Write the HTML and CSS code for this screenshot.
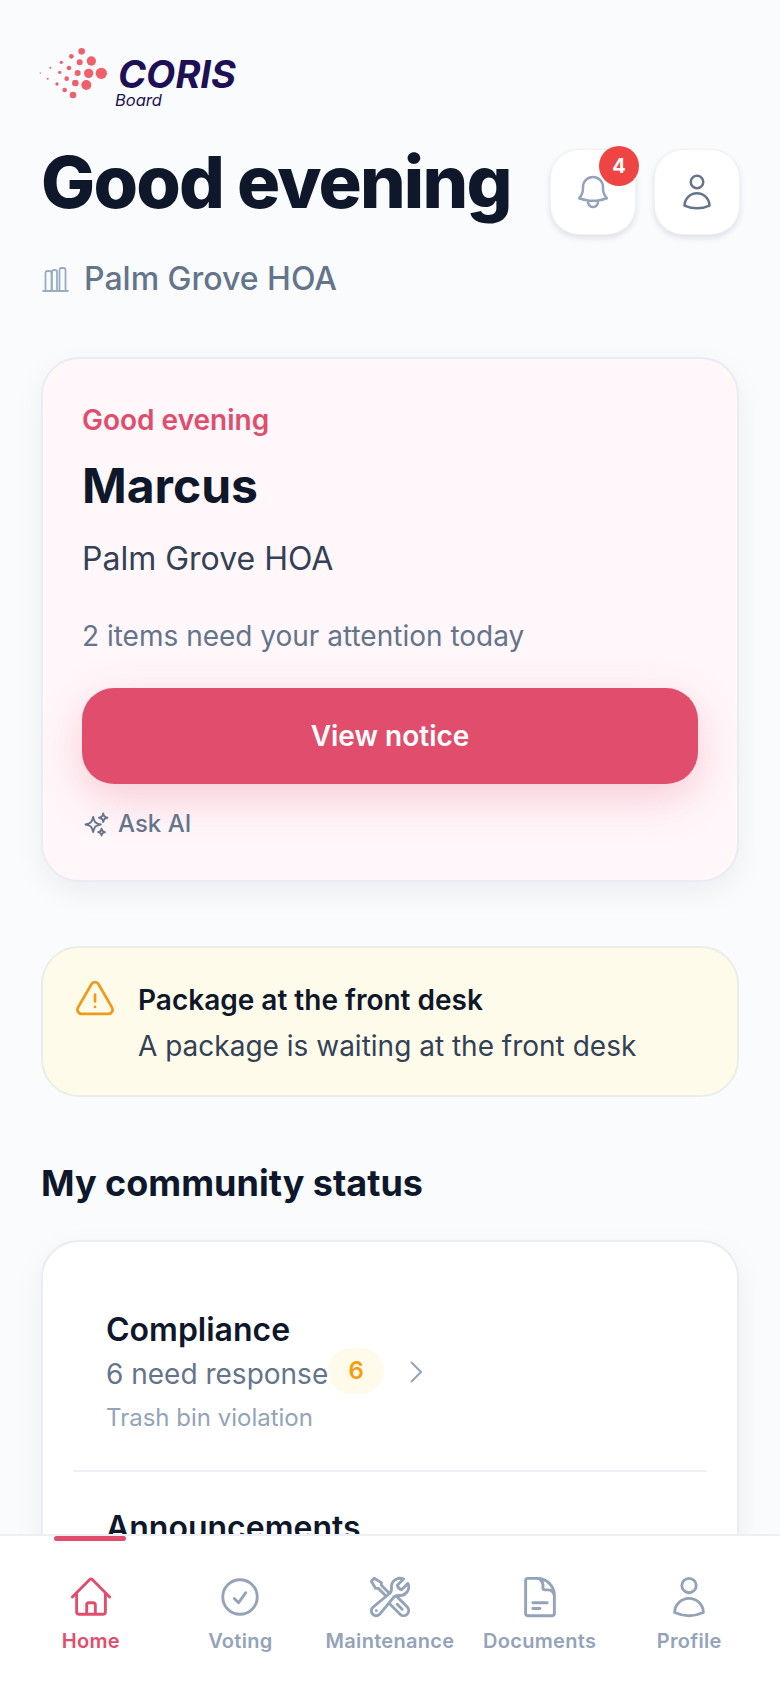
FILE: index.html
```html
<!DOCTYPE html>
<html lang="en">
<head>
    <meta charset="UTF-8">
    <meta name="viewport" content="width=device-width, initial-scale=1.0">
    <title>Coris Board</title>
    <link rel="stylesheet" href="styles.css">
</head>
<body>
    <main class="page">
        <div class="logo">
            <svg class="logo-dots" viewBox="115 80 210 156" fill="#f0606a">
                <circle cx="246" cy="93" r="10"/><circle cx="215" cy="108" r="7"/><circle cx="185" cy="126" r="5"/>
                <circle cx="152" cy="142" r="3"/><circle cx="122" cy="158" r="2"/><circle cx="144" cy="175" r="3"/>
                <circle cx="172" cy="191" r="5"/><circle cx="195" cy="209" r="7"/><circle cx="220" cy="224" r="10"/>
                <circle cx="240" cy="126" r="9"/><circle cx="275" cy="122" r="14"/><circle cx="208" cy="143" r="7"/>
                <circle cx="180" cy="156" r="5"/><circle cx="234" cy="158" r="9"/><circle cx="267" cy="159" r="14"/>
                <circle cx="305" cy="159" r="17"/><circle cx="201" cy="175" r="7"/><circle cx="227" cy="188" r="10"/>
                <circle cx="260" cy="194" r="15"/>
            </svg>
            <div class="logo-text">
                <div class="logo-name">CORIS</div>
                <div class="logo-sub">Board</div>
            </div>
        </div>

        <header class="head">
            <h1 class="title">Good evening</h1>
            <div class="head-btns">
                <button class="round-btn">
                    <svg class="icon bell" viewBox="0 0 24 24"><path d="M14.857 17.082a23.848 23.848 0 0 0 5.454-1.31A8.967 8.967 0 0 1 18 9.75V9A6 6 0 0 0 6 9v.75a8.967 8.967 0 0 1-2.312 6.022c1.733.64 3.56 1.085 5.455 1.31m5.714 0a24.255 24.255 0 0 1-5.714 0m5.714 0a3 3 0 1 1-5.714 0"/></svg>
                    <span class="count">4</span>
                </button>
                <button class="round-btn">
                    <svg class="icon user" viewBox="0 0 24 24"><path d="M15.75 6a3.75 3.75 0 1 1-7.5 0 3.75 3.75 0 0 1 7.5 0ZM4.501 20.118a7.5 7.5 0 0 1 14.998 0A17.933 17.933 0 0 1 12 21.75c-2.676 0-5.216-.584-7.499-1.632Z"/></svg>
                </button>
            </div>
        </header>

        <div class="place">
            <svg class="place-icon" viewBox="0 0 28 26"><path d="M1 25h26M4 24V7q0-2 2-2h2q2 0 2 2v17M10.500 24V6q0-2 2-2h1q2 0 2 2v18M18 24V4q0-2 2-2h2q2 0 2 2v20"/></svg>
            Palm Grove HOA
        </div>

        <section class="hero">
            <div class="hero-greet">Good evening</div>
            <div class="hero-name">Marcus</div>
            <div class="hero-place">Palm Grove HOA</div>
            <div class="hero-note">2 items need your attention today</div>
            <button class="hero-btn">View notice</button>
            <div class="ask">
                <svg class="ask-icon" viewBox="0 0 24 24"><path d="M9.813 15.904 9 18.750l-.813-2.846a4.500 4.500 0 0 0-3.090-3.090L2.250 12l2.846-.813a4.500 4.500 0 0 0 3.090-3.090L9 5.250l.813 2.846a4.500 4.500 0 0 0 3.090 3.090L15.750 12l-2.846.813a4.500 4.500 0 0 0-3.090 3.090ZM18.259 8.715 18 9.750l-.259-1.035a3.375 3.375 0 0 0-2.455-2.456L14.250 6l1.036-.259a3.375 3.375 0 0 0 2.455-2.456L18 2.250l.259 1.035a3.375 3.375 0 0 0 2.456 2.456L21.750 6l-1.035.259a3.375 3.375 0 0 0-2.456 2.456ZM16.894 20.567 16.500 21.750l-.394-1.183a2.250 2.250 0 0 0-1.423-1.423L13.500 18.750l1.183-.394a2.250 2.250 0 0 0 1.423-1.423l.394-1.183.394 1.183a2.250 2.250 0 0 0 1.423 1.423l1.183.394-1.183.394a2.250 2.250 0 0 0-1.423 1.423Z"/></svg>
                Ask AI
            </div>
        </section>

        <section class="alert">
            <svg class="alert-icon" viewBox="0 0 24 24"><path d="M12 9v3.750m-9.303 3.376c-.866 1.500.217 3.374 1.948 3.374h14.710c1.730 0 2.813-1.874 1.948-3.374L13.949 3.378c-.866-1.500-3.032-1.500-3.898 0L2.697 16.126ZM12 15.750h.007v.008H12v-.008Z"/></svg>
            <div>
                <div class="alert-title">Package at the front desk</div>
                <div class="alert-text">A package is waiting at the front desk</div>
            </div>
        </section>

        <h2 class="section-title">My community status</h2>

        <section class="status">
            <div class="status-row">
                <div class="status-name">Compliance</div>
                <div class="status-line">
                    <span class="status-sub">6 need response</span>
                    <span class="pill">6</span>
                    <svg class="chevron" viewBox="0 0 14 24"><path d="M2 2l10 10-10 10"/></svg>
                </div>
                <div class="status-note">Trash bin violation</div>
            </div>
            <div class="status-row second">
                <div class="status-name">Announcements</div>
            </div>
        </section>
    </main>

    <nav class="tabbar">
        <span class="tab-mark"></span>
        <a class="tab active">
            <svg class="icon" viewBox="0 0 24 24"><path d="m2.250 12 8.954-8.955c.440-.439 1.152-.439 1.591 0L21.750 12M4.500 9.750v10.125c0 .621.504 1.125 1.125 1.125H9.750v-4.875c0-.621.504-1.125 1.125-1.125h2.250c.621 0 1.125.504 1.125 1.125V21h4.125c.621 0 1.125-.504 1.125-1.125V9.750M8.250 21h8.250"/></svg>
            Home
        </a>
        <a class="tab">
            <svg class="icon" viewBox="0 0 24 24"><path d="M9 12.750 11.250 15 15 9.750M21 12a9 9 0 1 1-18 0 9 9 0 0 1 18 0Z"/></svg>
            Voting
        </a>
        <a class="tab">
            <svg class="icon" viewBox="0 0 24 24"><path d="M11.420 15.170 17.250 21A2.652 2.652 0 0 0 21 17.250l-5.877-5.877M11.420 15.170l2.496-3.030c.317-.384.740-.626 1.208-.766M11.420 15.170l-4.655 5.653a2.548 2.548 0 1 1-3.586-3.586l6.837-5.630m5.108-.233c.550-.164 1.163-.188 1.743-.140a4.500 4.500 0 0 0 4.486-6.336l-3.276 3.277a3.004 3.004 0 0 1-2.250-2.250l3.276-3.276a4.500 4.500 0 0 0-6.336 4.486c.091 1.076-.071 2.264-.904 2.950l-.102.085m-1.745 1.437L5.909 7.500H4.500L2.250 3.750l1.500-1.500L7.500 4.500v1.409l4.260 4.260m-1.745 1.437 1.745-1.437m6.615 8.206L15.750 15.750M4.867 19.125h.008v.008h-.008v-.008Z"/></svg>
            Maintenance
        </a>
        <a class="tab">
            <svg class="icon" viewBox="0 0 24 24"><path d="M19.500 14.250v-2.625a3.375 3.375 0 0 0-3.375-3.375h-1.500A1.125 1.125 0 0 1 13.500 7.125v-1.500a3.375 3.375 0 0 0-3.375-3.375H8.250m0 12.750h7.500m-7.500 3H12M10.500 2.250H5.625c-.621 0-1.125.504-1.125 1.125v17.250c0 .621.504 1.125 1.125 1.125h12.750c.621 0 1.125-.504 1.125-1.125V11.250a9 9 0 0 0-9-9Z"/></svg>
            Documents
        </a>
        <a class="tab">
            <svg class="icon" viewBox="0 0 24 24"><path d="M15.750 6a3.750 3.750 0 1 1-7.500 0 3.750 3.750 0 0 1 7.500 0ZM4.501 20.118a7.500 7.500 0 0 1 14.998 0A17.933 17.933 0 0 1 12 21.750c-2.676 0-5.216-.584-7.499-1.632Z"/></svg>
            Profile
        </a>
    </nav>
</body>
</html>
```

FILE: styles.css
```css
* {
    box-sizing: border-box;
}

body {
    margin: 0;
    height: 1688px;
    overflow: hidden;
    background-color: #f9fbfd;
    color: #0f172a;
    font-family: Inter, "Liberation Sans", sans-serif;
    position: relative;
}

.page {
    padding: 47px 41px 0;
}

.icon {
    fill: none;
    stroke: currentColor;
    stroke-width: 1.5;
    stroke-linecap: round;
    stroke-linejoin: round;
}

/* logo */
.logo {
    display: flex;
    align-items: flex-start;
    gap: 10px;
    margin-left: -3px;
    height: 62px;
}
.logo-dots {
    width: 70px;
    height: 52px;
}
.logo-text {
    padding-top: 12px;
}
.logo-name {
    font-size: 38px;
    line-height: 30px;
    font-weight: 700;
    font-style: italic;
    color: #1e1055;
}
.logo-sub {
    font-size: 16.5px;
    line-height: 18px;
    font-style: italic;
    color: #1e1055;
    margin-left: -3px;
    margin-top: 2px;
}

/* header */
.head {
    display: flex;
    justify-content: space-between;
    align-items: flex-start;
    margin-top: 31px;
}
.title {
    margin: 0;
    font-size: 72px;
    line-height: 84px;
    font-weight: 800;
    letter-spacing: -1.8px;
}
.head-btns {
    display: flex;
    gap: 20px;
    margin-top: 10px;
}
.round-btn {
    position: relative;
    width: 84px;
    height: 84px;
    padding: 0;
    border: none;
    border-radius: 28px;
    background-color: #fff;
    box-shadow: 0 0 0 1px #eef1f5, 0 3px 7px rgba(15, 23, 42, 0.14);
    display: flex;
    align-items: center;
    justify-content: center;
}
.bell {
    width: 40px;
    height: 40px;
    color: #94a3b8;
}
.user {
    width: 40px;
    height: 40px;
    color: #64748b;
}
.count {
    position: absolute;
    top: -4px;
    right: -4px;
    width: 40px;
    height: 40px;
    border-radius: 50%;
    background-color: #ef4444;
    color: #fff;
    font-family: Inter, sans-serif;
    font-size: 20px;
    font-weight: 700;
    line-height: 40px;
    text-align: center;
}

.place {
    display: flex;
    align-items: center;
    gap: 14px;
    margin-top: 23px;
    font-size: 32px;
    line-height: 44px;
    font-weight: 500;
    color: #64748b;
}
.place-icon {
    width: 29px;
    height: 26px;
    fill: none;
    stroke: #9aabc4;
    stroke-width: 1.8;
}

/* hero card */
.hero {
    margin-top: 56px;
    height: 525px;
    padding: 44px 39px 0;
    border: 2px solid #e9edf2;
    border-radius: 38px;
    background-color: #fff7fa;
    box-shadow: 0 10px 30px rgba(15, 23, 42, 0.06);
}
.hero-greet {
    font-size: 28px;
    line-height: 34px;
    font-weight: 600;
    color: #e14d6c;
}
.hero-name {
    margin-top: 20px;
    font-size: 48px;
    line-height: 58px;
    font-weight: 700;
}
.hero-place {
    margin-top: 24px;
    font-size: 32px;
    line-height: 40px;
    color: #334155;
}
.hero-note {
    margin-top: 38px;
    font-size: 28px;
    line-height: 38px;
    color: #64748b;
}
.hero-btn {
    display: block;
    width: 100%;
    height: 96px;
    margin-top: 33px;
    border: none;
    border-radius: 32px;
    background-color: #e14d6c;
    color: #fff;
    font-family: Inter, sans-serif;
    font-size: 28px;
    font-weight: 600;
    box-shadow: 0 14px 44px rgba(225, 77, 108, 0.26);
}
.ask {
    display: flex;
    align-items: center;
    gap: 8px;
    margin-top: 24px;
    font-size: 24px;
    line-height: 32px;
    font-weight: 500;
    color: #64748b;
}
.ask-icon {
    width: 27px;
    height: 27px;
    margin-left: 1px;
    fill: none;
    stroke: #64748b;
    stroke-width: 1.7;
    stroke-linejoin: round;
}

/* notice */
.alert {
    display: flex;
    gap: 21px;
    margin-top: 64px;
    height: 151px;
    padding: 33px 30px 0;
    border: 2px solid #ebeee8;
    border-radius: 38px;
    background-color: #fffbeb;
}
.alert-icon {
    width: 44px;
    height: 44px;
    flex: none;
    margin-top: -3px;
    fill: none;
    stroke: #f09a1a;
    stroke-width: 1.5;
    stroke-linecap: round;
    stroke-linejoin: round;
}
.alert-title {
    font-size: 28px;
    line-height: 38px;
    font-weight: 600;
}
.alert-text {
    margin-top: 8px;
    font-size: 28px;
    line-height: 38px;
    color: #334155;
}

/* status list */
.section-title {
    margin: 63px 0 0;
    font-size: 36px;
    line-height: 46px;
    font-weight: 700;
}
.status {
    margin-top: 34px;
    padding: 0 30px;
    border: 2px solid #e9edf2;
    border-radius: 38px;
    background-color: #fff;
    box-shadow: 0 10px 30px rgba(15, 23, 42, 0.06);
    height: 400px;
}
.status-row {
    padding: 67px 33px 34px;
    border-bottom: 2px solid #edf0f4;
}
.status-row.second {
    padding-top: 35px;
    border-bottom: none;
}
.status-name {
    font-size: 32px;
    line-height: 42px;
    font-weight: 600;
}
.status-line {
    display: flex;
    align-items: center;
}
.status-sub {
    font-size: 28px;
    line-height: 46px;
    color: #64748b;
}
.pill {
    width: 56px;
    height: 46px;
    margin-top: -6px;
    border-radius: 23px;
    background-color: #fffbeb;
    color: #f59e0b;
    font-size: 24px;
    font-weight: 600;
    line-height: 46px;
    text-align: center;
}
.chevron {
    width: 14px;
    height: 24px;
    margin-left: 25px;
    margin-top: -4px;
    fill: none;
    stroke: #94a3b8;
    stroke-width: 2;
}
.status-note {
    margin-top: 3px;
    font-size: 24px;
    line-height: 36px;
    color: #94a3b8;
}

/* bottom nav */
.tabbar {
    position: fixed;
    left: 0;
    right: 0;
    bottom: 0;
    height: 154px;
    padding: 0 16px;
    display: grid;
    grid-template-columns: repeat(5, 1fr);
    border-top: 2px solid #eceff3;
    background-color: #fff;
}
.tab-mark {
    position: absolute;
    left: 54px;
    top: 0;
    width: 72px;
    height: 5px;
    border-radius: 3px;
    background-color: #e14d6c;
}
.tab {
    display: flex;
    flex-direction: column;
    align-items: center;
    padding-top: 38px;
    font-size: 20px;
    line-height: 30px;
    font-weight: 600;
    letter-spacing: 0.3px;
    color: #94a3b8;
}
.tab .icon {
    width: 46px;
    height: 46px;
    margin-bottom: 6px;
}
.tab.active {
    color: #e14d6c;
}
```
